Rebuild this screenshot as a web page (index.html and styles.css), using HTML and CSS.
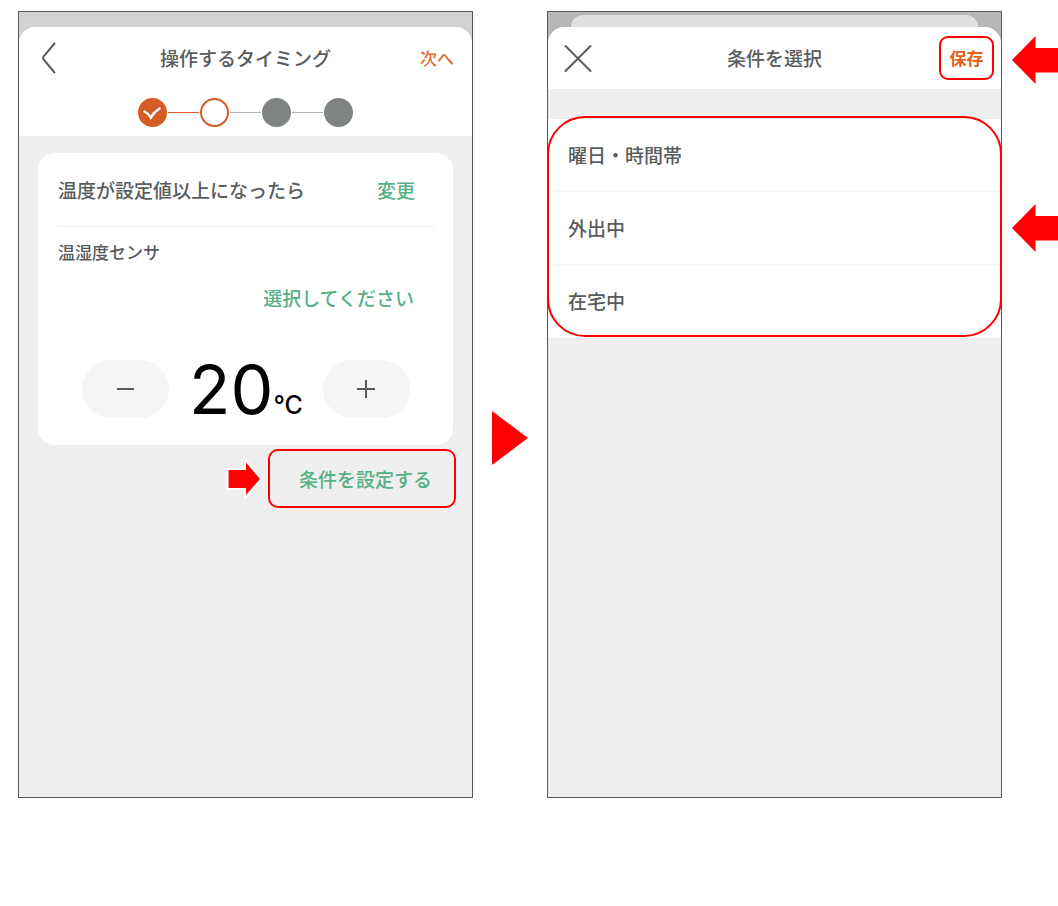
FILE: index.html
```html
<!DOCTYPE html>
<html lang="ja">
<head>
<meta charset="utf-8">
<meta name="viewport" content="width=device-width, initial-scale=1">
<title>操作するタイミング</title>
<link rel="stylesheet" href="styles.css">
</head>
<body>
<main class="guide">
  <section class="phone phone-timing">
    <div class="sheet">
      <header class="bar">
        <button class="icon-button" type="button" aria-label="戻る">
          <svg width="32" height="34" viewBox="0 0 32 34"><path d="M22.500 2.500 11.500 15.500Q10.500 17 11.500 18.500L22.500 31.500" /></svg>
        </button>
        <h1 class="title">操作するタイミング</h1>
        <button class="action" type="button">次へ</button>
      </header>
      <div class="steps">
        <span class="step step-done">
          <svg width="29" height="29" viewBox="0 0 29 29"><path d="M6.500 13.500Q10.500 15.500 12.800 19.500Q16 14 21.500 10.500" /></svg>
        </span>
        <span class="line line-done"></span>
        <span class="step step-current"></span>
        <span class="line"></span>
        <span class="step"></span>
        <span class="line"></span>
        <span class="step"></span>
      </div>
    </div>
    <div class="card">
      <div class="trigger">
        <span>温度が設定値以上になったら</span>
        <button class="link" type="button">変更</button>
      </div>
      <p class="sensor">温湿度センサ</p>
      <button class="link pick" type="button">選択してください</button>
      <div class="stepper">
        <button class="round" type="button" aria-label="下げる">
          <svg width="19" height="19" viewBox="0 0 19 19"><path d="M1 9H18" /></svg>
        </button>
        <output class="value">20<span class="unit">°C</span></output>
        <button class="round" type="button" aria-label="上げる">
          <svg width="19" height="19" viewBox="0 0 19 19"><path d="M0 9H18M9 0V18" /></svg>
        </button>
      </div>
    </div>
    <div class="condition">
      <svg class="small-arrow" width="36" height="38" viewBox="0 0 36 38"><path d="M2.500 10H20V2.500L34 19 20 35V28H2.500Z" /></svg>
      <button class="link marked" type="button">条件を設定する</button>
    </div>
  </section>

  <svg class="next" width="36" height="54" viewBox="0 0 36 54"><path d="M0 0 36 27 0 54Z" /></svg>

  <section class="phone phone-select">
    <div class="behind"></div>
    <div class="sheet">
      <header class="bar">
        <button class="icon-button" type="button" aria-label="閉じる">
          <svg width="32" height="34" viewBox="0 0 32 34"><path d="M4.500 5 29.500 30M29.500 5 4.500 30" /></svg>
        </button>
        <h2 class="title">条件を選択</h2>
        <button class="action save" type="button">保存</button>
      </header>
    </div>
    <div class="choices">
      <button class="choice" type="button">曜日・時間帯</button>
      <button class="choice" type="button">外出中</button>
      <button class="choice" type="button">在宅中</button>
    </div>
  </section>

  <div class="pointers">
    <svg width="46" height="48" viewBox="0 0 46 48"><path d="M0 24 23.500 0V12H46V36.500H23.500V48Z" /></svg>
    <svg width="46" height="48" viewBox="0 0 46 48"><path d="M0 24 23.500 0V12H46V36.500H23.500V48Z" /></svg>
  </div>
</main>
</body>
</html>
```
FILE: styles.css
```css
* {
  box-sizing: border-box;
}

body {
  margin: 0;
  background: #fff;
  color: #595c5d;
  font-family: "Noto Sans CJK JP", sans-serif;
  font-size: 19px;
  line-height: 28px;
}

button {
  margin: 0;
  padding: 0;
  border: 0;
  background: none;
  color: inherit;
  font: inherit;
  cursor: pointer;
}

svg {
  display: block;
}

.guide {
  display: grid;
  grid-template-columns: 1fr 74px 1fr 56px;
  align-items: start;
  padding: 11px 0 40px 18px;
}

.phone {
  aspect-ratio: 455 / 787;
  border: 1px solid #58595b;
  font-weight: 500;
}

.phone-timing {
  padding-top: 15px;
  background: linear-gradient(#d2d2d2 50px, #efefef 50px);
}

.phone-select {
  padding-top: 3px;
  background: linear-gradient(#b7b7b7 50px, #efefef 50px);
}

.behind {
  height: 12px;
  margin: 0 23px;
  border-radius: 13px 13px 0 0;
  background: #e0e0e0;
}

.sheet {
  border-radius: 16px 16px 0 0;
  background: #fff;
}

.bar {
  display: grid;
  grid-template-columns: 1fr auto 1fr;
  align-items: center;
  height: 62px;
}

.icon-button {
  justify-self: start;
  margin-left: 13px;
}

.icon-button path {
  fill: none;
  stroke: #595c5d;
  stroke-width: 2;
  stroke-linecap: round;
}

.title {
  margin: 0;
  font-size: 19px;
  font-weight: inherit;
}

.action {
  justify-self: end;
  margin-right: 18px;
  color: #e36c2e;
  font-size: 17px;
}

.save {
  width: 55px;
  height: 44px;
  margin-right: 7px;
  border: 2px solid #f00;
  border-radius: 9px;
  color: #e5601a;
  font-weight: 700;
}

.steps {
  display: flex;
  justify-content: center;
  align-items: center;
  gap: 1px;
  padding: 9px 0;
}

.step {
  width: 29px;
  height: 29px;
  border-radius: 50%;
  background: #7f8383;
}

.step-done {
  background: #d65c26;
}

.step-done path {
  fill: none;
  stroke: #fff;
  stroke-width: 2.5;
  stroke-linecap: round;
}

.step-current {
  border: 2px solid #d65c26;
  background: #fff;
}

.line {
  width: 31px;
  height: 1px;
  background: #b5b5b5;
}

.line-done {
  background: #d65c26;
}

.card {
  margin: 17px 19px 0;
  padding: 0 19px 27px 20px;
  border-radius: 17px;
  background: #fff;
}

.trigger {
  display: flex;
  justify-content: space-between;
  align-items: center;
  height: 74px;
  padding-right: 19px;
  border-bottom: 1px solid #ececec;
}

.link {
  color: #55b086;
}

.sensor {
  margin: 11px 0 0;
  font-size: 17px;
}

.pick {
  display: block;
  margin: 18px 20px 0 auto;
}

.stepper {
  display: flex;
  justify-content: space-between;
  align-items: center;
  height: 58px;
  margin-top: 48px;
  padding: 0 24px;
}

.round {
  display: grid;
  place-items: center;
  width: 87px;
  height: 58px;
  border-radius: 29px;
  background: #f5f5f5;
}

.round path {
  fill: none;
  stroke: #595c5d;
  stroke-width: 2;
}

.value {
  color: #000;
  font-family: Inter, sans-serif;
  font-size: 68px;
  font-weight: 400;
  line-height: 58px;
}

.unit {
  font-size: 25px;
  font-weight: 500;
  line-height: 25px;
}

.condition {
  display: flex;
  justify-content: flex-end;
  align-items: center;
  gap: 6px;
  margin-top: 4px;
  padding-right: 16px;
}

.small-arrow path {
  fill: #f00;
  stroke: #fff;
  stroke-width: 4;
  paint-order: stroke;
}

.marked {
  width: 188px;
  height: 59px;
  padding-right: 22px;
  border: 2px solid #f00;
  border-radius: 10px;
  text-align: right;
}

.next {
  justify-self: center;
  margin-top: 400px;
}

.next path,
.pointers path {
  fill: #f00;
}

.choices {
  position: relative;
  margin-top: 30px;
  background: #fff;
}

.choices::after {
  content: "";
  position: absolute;
  inset: -3px -1px 1px;
  border: 2px solid #f00;
  border-radius: 38px;
  pointer-events: none;
}

.choice {
  display: block;
  width: 100%;
  height: 73px;
  padding: 0 20px;
  border-bottom: 1px solid #f7f7f7;
  text-align: left;
}

.pointers {
  display: grid;
  gap: 120px;
  justify-content: end;
  padding-top: 25px;
}
```
